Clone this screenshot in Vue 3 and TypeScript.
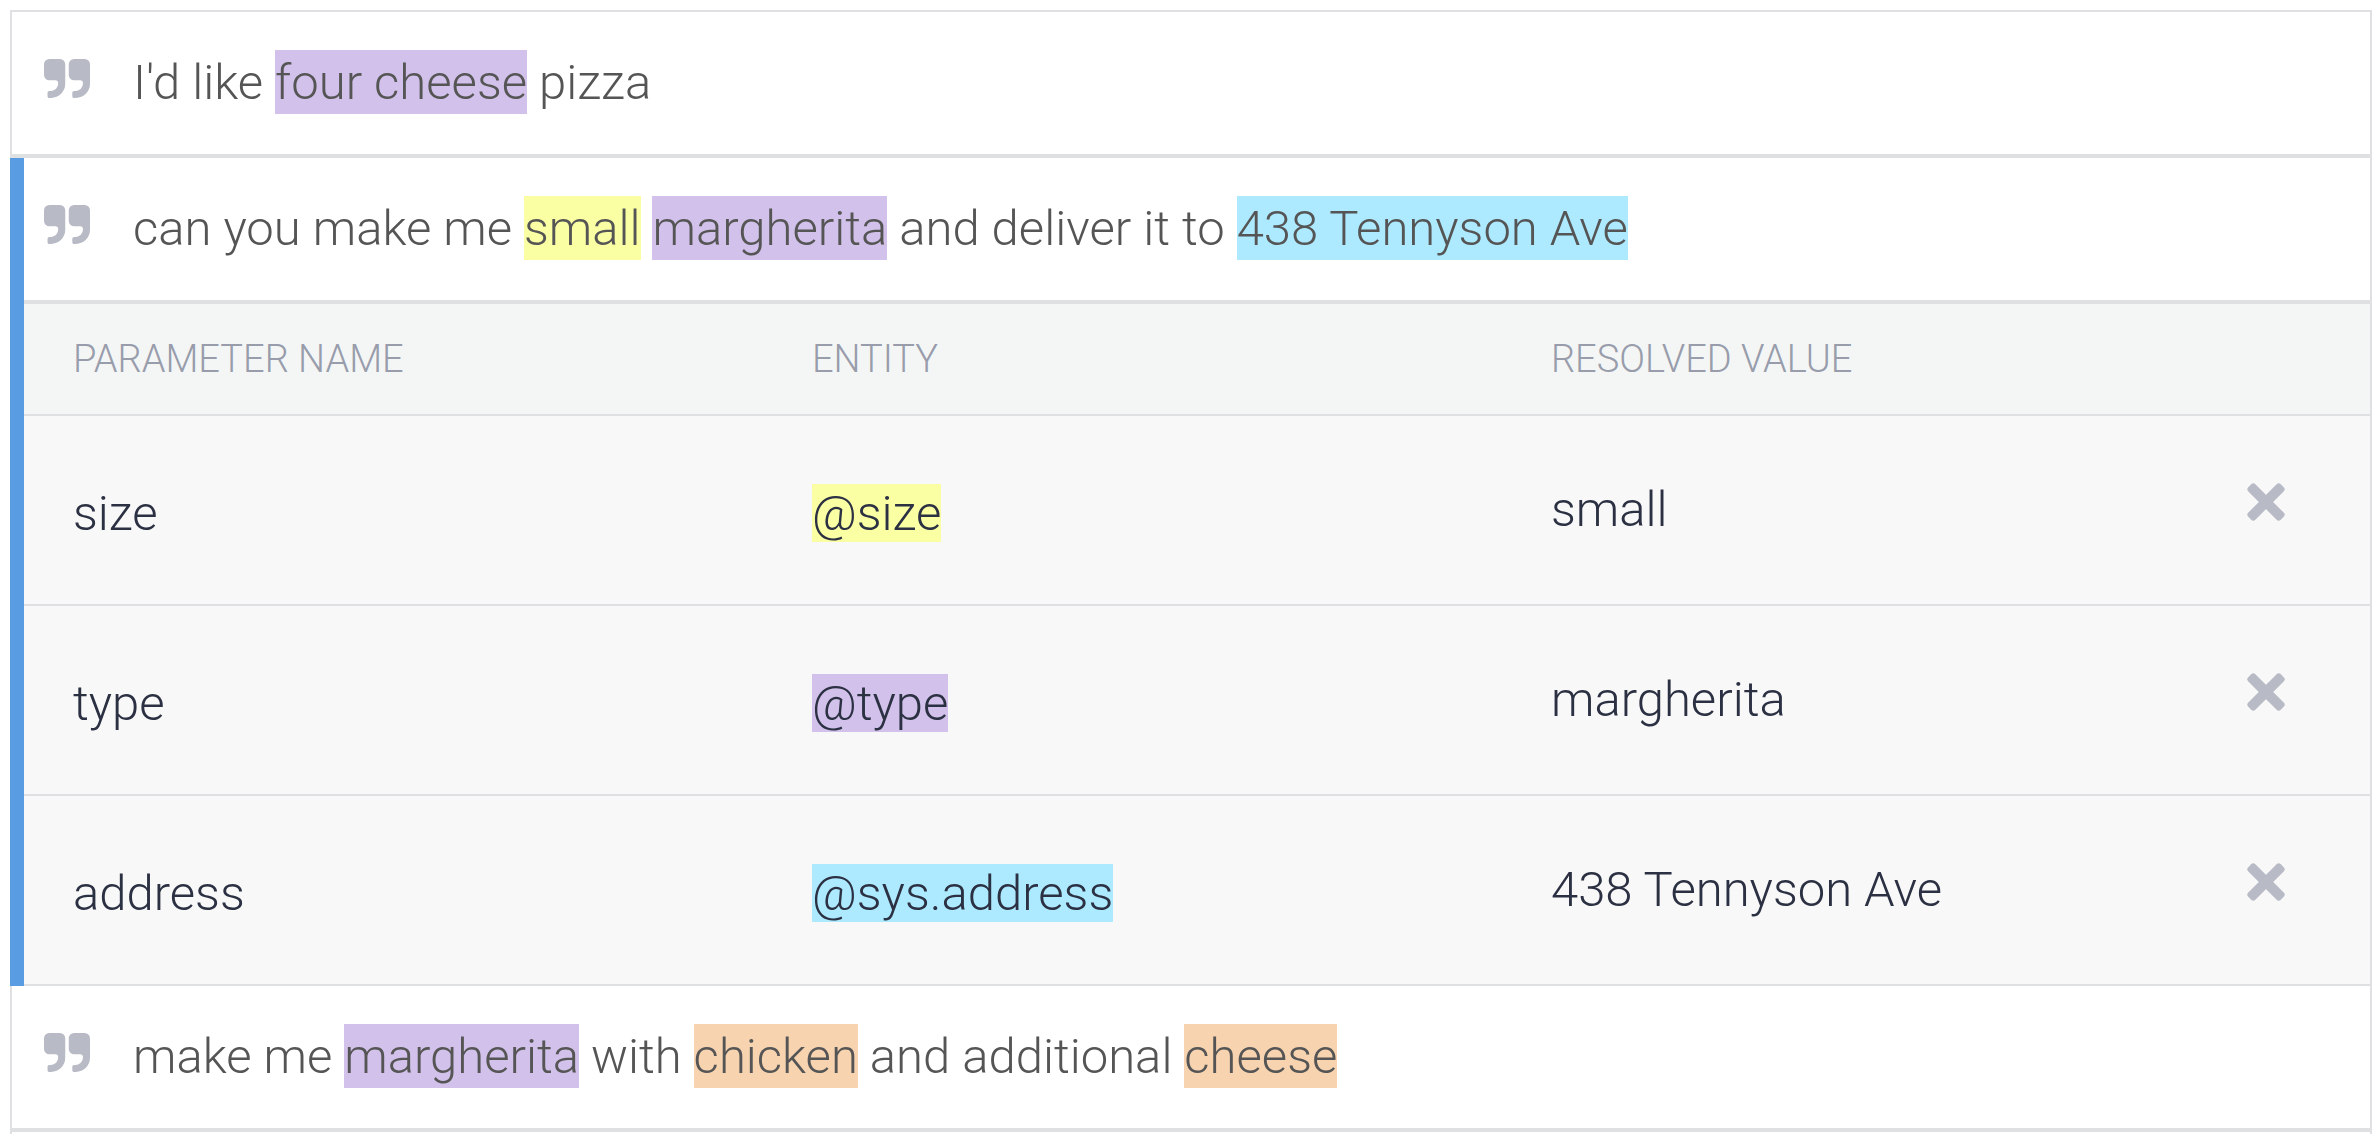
<script setup lang="ts">
type Tone = 'purple' | 'yellow' | 'cyan' | 'orange'

interface Part {
  text: string
  tone?: Tone
}

interface Parameter {
  name: string
  entity: string
  tone: Tone
  value: string
}

interface Phrase {
  id: number
  parts: Part[]
  parameters?: Parameter[]
}

const phrases: Phrase[] = [
  {
    id: 1,
    parts: [{ text: "I'd like " }, { text: 'four cheese', tone: 'purple' }, { text: ' pizza' }],
  },
  {
    id: 2,
    parts: [
      { text: 'can you make me ' },
      { text: 'small', tone: 'yellow' },
      { text: ' ' },
      { text: 'margherita', tone: 'purple' },
      { text: ' and deliver it to ' },
      { text: '438 Tennyson Ave', tone: 'cyan' },
    ],
    parameters: [
      { name: 'size', entity: '@size', tone: 'yellow', value: 'small' },
      { name: 'type', entity: '@type', tone: 'purple', value: 'margherita' },
      { name: 'address', entity: '@sys.address', tone: 'cyan', value: '438 Tennyson Ave' },
    ],
  },
  {
    id: 3,
    parts: [
      { text: 'make me ' },
      { text: 'margherita', tone: 'purple' },
      { text: ' with ' },
      { text: 'chicken', tone: 'orange' },
      { text: ' and additional ' },
      { text: 'cheese', tone: 'orange' },
    ],
  },
]
</script>

<template>
  <main class="phrases">
    <section
      v-for="phrase in phrases"
      :key="phrase.id"
      class="phrase"
      :class="{ active: phrase.parameters }"
    >
      <div class="sentence">
        <svg class="quote" viewBox="0 128 1664 1408" aria-hidden="true">
          <path
            d="M768 320v704q0 104-40.500 198.500t-109.500 163.500-163.500 109.500-198.500 40.500h-64q-26 0-45-19t-19-45v-128q0-26 19-45t45-19h64q106 0 181-75t75-181v-32q0-40-28-68t-68-28h-224q-80 0-136-56t-56-136v-384q0-80 56-136t136-56h384q80 0 136 56t56 136zM1664 320v704q0 104-40.500 198.500t-109.500 163.500-163.500 109.500-198.500 40.500h-64q-26 0-45-19t-19-45v-128q0-26 19-45t45-19h64q106 0 181-75t75-181v-32q0-40-28-68t-68-28h-224q-80 0-136-56t-56-136v-384q0-80 56-136t136-56h384q80 0 136 56t56 136z"
          />
        </svg>
        <p class="text"><template v-for="(part, i) in phrase.parts" :key="i"><mark v-if="part.tone" :class="part.tone">{{ part.text }}</mark><template v-else>{{ part.text }}</template></template></p>
      </div>

      <table v-if="phrase.parameters" class="parameters">
        <thead>
          <tr>
            <th scope="col">PARAMETER NAME</th>
            <th scope="col">ENTITY</th>
            <th scope="col">RESOLVED VALUE</th>
            <td class="remove-col"></td>
          </tr>
        </thead>
        <tbody>
          <tr v-for="parameter in phrase.parameters" :key="parameter.name">
            <td>{{ parameter.name }}</td>
            <td><mark :class="parameter.tone">{{ parameter.entity }}</mark></td>
            <td class="value">{{ parameter.value }}</td>
            <td class="remove-col">
              <button type="button" class="remove" :aria-label="`Remove ${parameter.name}`">
                <svg viewBox="-19 -19 38 38" aria-hidden="true">
                  <rect x="-23" y="-5" width="46" height="10" rx="3" transform="rotate(45)" />
                  <rect x="-23" y="-5" width="46" height="10" rx="3" transform="rotate(-45)" />
                </svg>
              </button>
            </td>
          </tr>
        </tbody>
      </table>
    </section>
  </main>
</template>

<style>
body {
  margin: 0;
  background: #ffffff;
}
</style>

<style scoped>
.phrases {
  margin: 10px 8px 0 10px;
  padding-bottom: 2px;
  border: 2px solid #dfe0e1;
  border-bottom: 0;
  font-family: Roboto, "Liberation Sans", sans-serif;
  font-size: 49px;
  font-weight: 300;
  line-height: 60px;
  color: #555555;
}

.phrase.active {
  margin-left: -2px;
  border-left: 14px solid #5a9ce2;
}

.sentence {
  display: flex;
  align-items: flex-start;
  gap: 43px;
  padding: 41px 32px;
  border-bottom: 4px solid #dfe0e2;
}

.active .sentence {
  padding-left: 20px;
}

.quote {
  flex: none;
  width: 46px;
  height: 39px;
  margin-top: 6px;
  fill: #b8bbc6;
}

.text {
  margin: 0;
}

mark {
  padding-top: 1px;
  color: inherit;
}

.text mark {
  padding: 4px 0 3px;
}

.purple {
  background: #d2c1ea;
}

.yellow {
  background: #fbffa4;
}

.cyan {
  background: #aeeaff;
}

.orange {
  background: #f7d3b0;
}

.parameters {
  width: 100%;
  table-layout: fixed;
  border-collapse: separate;
  border-spacing: 0;
  color: #2b3042;
}

.parameters th,
.parameters td {
  padding: 68px 0 60px 49px;
  border-bottom: 2px solid #dfe0e1;
  background: #f8f8f8;
  text-align: left;
  vertical-align: top;
}

.parameters th {
  width: 31.5%;
  box-sizing: border-box;
  font-size: 38px;
  font-weight: 300;
  line-height: 44px;
  color: #989cab;
}

.parameters td.value {
  padding-top: 64px;
}

.parameters td.remove-col {
  padding-top: 67px;
  padding-left: 6px;
}

.parameters thead th,
.parameters thead td.remove-col {
  padding-top: 33px;
  padding-bottom: 33px;
  background: #f3f6f5;
}

.remove {
  display: block;
  width: 38px;
  height: 38px;
  padding: 0;
  border: 0;
  background: none;
  cursor: pointer;
}

.remove svg {
  display: block;
  width: 38px;
  height: 38px;
  fill: #b8bbc6;
}
</style>
